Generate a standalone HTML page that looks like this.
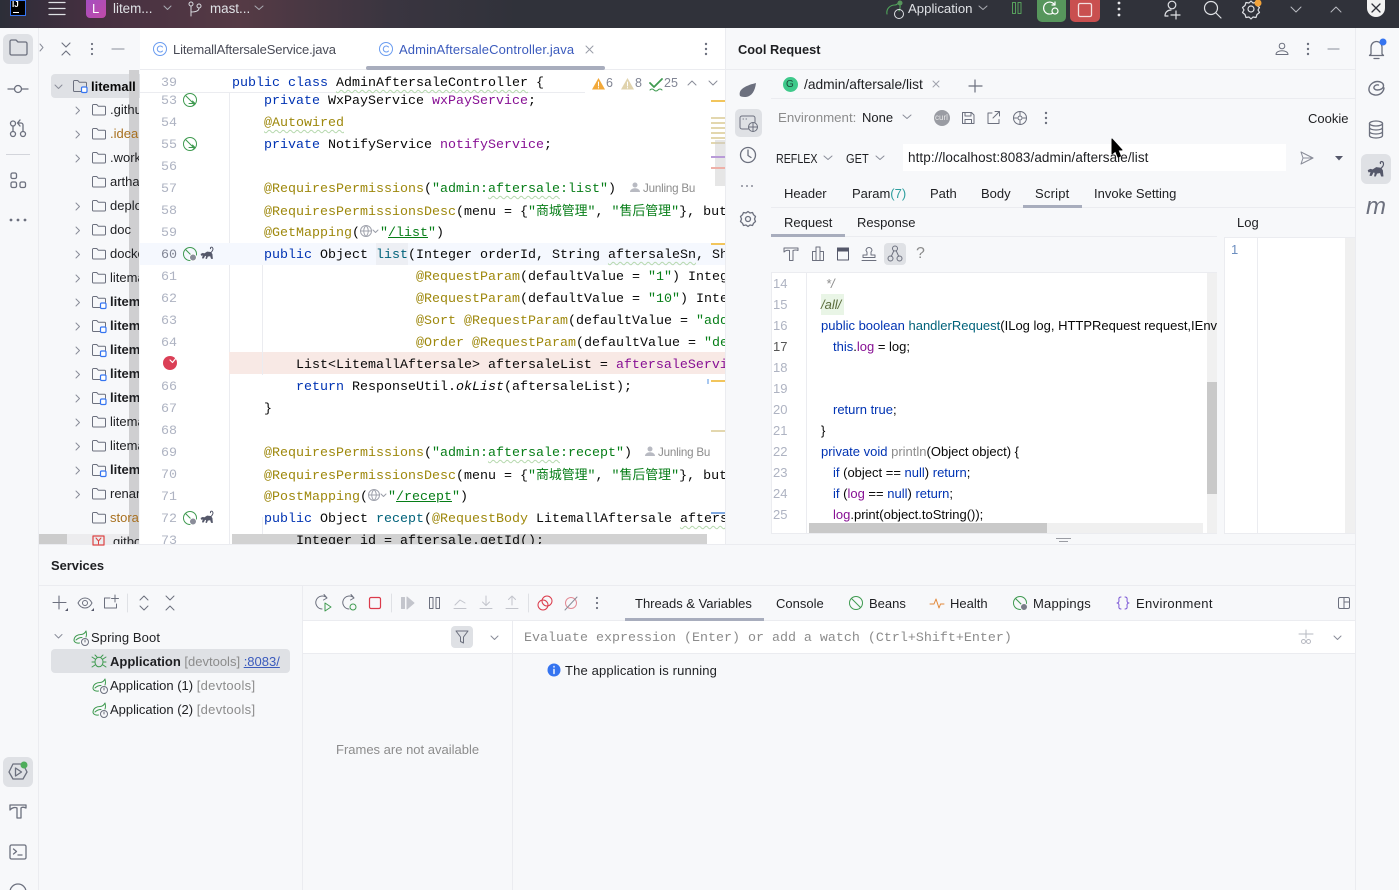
<!DOCTYPE html>
<html><head><meta charset="utf-8"><style>
html,body{margin:0;padding:0;width:1399px;height:890px;overflow:hidden;background:#f7f8fa}
body{font-family:"Liberation Sans","Noto Sans CJK SC",sans-serif;font-size:13px;color:#1e1f22;position:relative}
.a{position:absolute}
.t{position:absolute;white-space:nowrap;line-height:16px;margin-top:1px}
.c{position:absolute;white-space:pre;line-height:22px;height:22px;margin-top:4px;font-family:"Liberation Mono","Noto Sans CJK SC",monospace;font-size:13.333px;color:#080808}
.n{position:absolute;left:140px;width:37px;text-align:right;line-height:22px;margin-top:4px;font-family:"Liberation Mono",monospace;font-size:13.333px;color:#aeb3c2}
.k{color:#0033b3}.an{color:#9e880d}.s{color:#067d17}.f{color:#871094}
.z{font-size:12.9px}
.w{text-decoration:underline wavy #b5d8ad 1px;text-underline-offset:3px}
.g{color:#8c8c8c}
.p{position:absolute;left:110px;white-space:nowrap;line-height:16px}
.b{font-weight:bold}
.l{position:absolute;left:773px;color:#aeb3c2;line-height:21px;font-size:13px}
.q{position:absolute;white-space:pre;line-height:21px;font-size:13px;color:#080808}
</style></head><body>

<!-- title bar -->
<div class="a" style="left:0;top:0;width:1399px;height:28px;background:linear-gradient(90deg,#2c2e38 0,#452f40 90px,#553a45 240px,#3a3540 390px,#30323a 520px,#30323a 100%)"></div>
<div class="a" style="left:10px;top:0;width:14px;height:14px;background:#000;border:1px solid #3574f0"></div>
<div class="t" style="left:12px;top:-1px;font-size:8px;font-weight:bold;color:#fff;line-height:10px">IJ</div>
<div class="a" style="left:13px;top:12px;width:6px;height:1px;background:#fff"></div>
<div class="a" style="left:86px;top:0;width:20px;height:18px;border-radius:0 0 4px 4px;background:linear-gradient(135deg,#a44fc0,#c04aa8)"></div>
<div class="t" style="left:92px;top:0;color:#fff;font-size:13px">L</div>
<div class="t" style="left:113px;top:0;color:#dfe1e5;font-size:13.4px">litem...</div>
<div class="t" style="left:210px;top:0;color:#dfe1e5;font-size:13.4px">mast...</div>
<div class="t" style="left:908px;top:0;color:#dfe1e5;font-size:13.2px">Application</div>
<div class="a" style="left:1037px;top:0;width:29px;height:22px;background:#57965c;border-radius:0 0 5px 5px"></div>
<div class="a" style="left:1070px;top:0;width:30px;height:22px;background:#c94f4f;border-radius:0 0 5px 5px"></div>
<div class="a" style="left:1367px;top:0;width:18px;height:17px;border-radius:0 0 9px 9px;background:#f2f2f2"></div>

<!-- left strip / panels -->
<div class="a" style="left:38px;top:28px;width:1px;height:862px;background:#ebecf0"></div>
<div class="a" style="left:3px;top:34px;width:30px;height:30px;border-radius:6px;background:#dfe1e5"></div>
<div class="a" style="left:3px;top:757px;width:30px;height:30px;border-radius:6px;background:#dfe1e5"></div>
<div class="a" style="left:6px;top:154px;width:24px;height:1px;background:#d3d5db"></div>
<div class="a" style="left:1355px;top:28px;width:1px;height:862px;background:#ebecf0"></div>
<div class="a" style="left:1361px;top:154px;width:30px;height:30px;border-radius:6px;background:#dfe1e5"></div>

<!-- project tree -->
<div class="a" style="left:39px;top:70px;width:101px;height:475px;overflow:hidden">
  <div class="a" style="left:12px;top:4px;width:90px;height:24px;border-radius:4px 0 0 4px;background:#dfe1e5"></div>
  <div class="a" style="left:90px;top:0;width:10px;height:475px;background:#cfcfd1"></div>
</div>
<div class="a" style="left:39px;top:534px;width:90px;height:11px;background:#ececee"></div>
<div class="a" style="left:39px;top:534px;width:28px;height:11px;background:#cccccc"></div>
<div class="a" style="left:0;top:0;width:139px;height:545px;overflow:hidden">
  <div class="p b" style="left:91px;top:79px;color:#080808">litemall</div>
  <div class="p" style="top:102px">.github</div>
  <div class="p" style="top:126px;color:#a8701f">.idea</div>
  <div class="p" style="top:150px">.workflow</div>
  <div class="p" style="top:174px">arthas</div>
  <div class="p" style="top:198px">deploy</div>
  <div class="p" style="top:222px">doc</div>
  <div class="p" style="top:246px">docker</div>
  <div class="p" style="top:270px">litemall</div>
  <div class="p b" style="top:294px">litemall</div>
  <div class="p b" style="top:318px">litemall</div>
  <div class="p b" style="top:342px">litemall</div>
  <div class="p b" style="top:366px">litemall</div>
  <div class="p b" style="top:390px">litemall</div>
  <div class="p" style="top:414px">litemall</div>
  <div class="p" style="top:438px">litemall</div>
  <div class="p b" style="top:462px">litemall</div>
  <div class="p" style="top:486px">rename</div>
  <div class="p" style="top:510px;color:#a8701f">storage</div>
  <div class="p" style="top:534px;left:113px">gitbook</div>
</div>

<!-- editor -->
<div class="a" style="left:140px;top:28px;width:586px;height:517px;background:#fff;overflow:hidden">
  <div class="a" style="left:0;top:41px;width:586px;height:1px;background:#ebecf0"></div>
  <div class="a" style="left:89px;top:42px;width:1px;height:475px;background:#ebecf0"></div>
  <div class="a" style="left:0;top:215px;width:586px;height:22px;background:#f5f8fe"></div>
  <div class="a" style="left:89px;top:324px;width:497px;height:22px;background:#f8e9e5"></div>
  <div class="a" style="left:122px;top:237px;width:1px;height:110px;background:#ebecf0"></div>
  <div class="a" style="left:122px;top:489px;width:1px;height:28px;background:#ebecf0"></div>
</div>
<div class="a" style="left:376px;top:243px;width:32px;height:22px;background:#edeff4"></div>
<div class="t" style="left:173px;top:41px;color:#494b57;letter-spacing:-.14px">LitemallAftersaleService.java</div>
<div class="t" style="left:399px;top:41px;color:#3b5bbd;letter-spacing:.14px">AdminAftersaleController.java</div>
<div class="a" style="left:366px;top:66px;width:239px;height:4px;border-radius:2px;background:#a8adbd"></div>

<div class="a" style="left:140px;top:70px;width:586px;height:475px;overflow:hidden">
<div style="position:absolute;left:-140px;top:-70px;width:726px;height:545px">
<div class="a" style="left:232px;top:534px;width:475px;height:11px;background:#d2d2d2"></div>
<div class="n" style="top:87px">53</div><div class="n" style="top:109px">54</div><div class="n" style="top:131px">55</div><div class="n" style="top:153px">56</div><div class="n" style="top:175px">57</div><div class="n" style="top:197px">58</div><div class="n" style="top:219px">59</div><div class="n" style="top:241px;color:#818594">60</div><div class="n" style="top:263px">61</div><div class="n" style="top:285px">62</div><div class="n" style="top:307px">63</div><div class="n" style="top:329px">64</div><div class="n" style="top:373px">66</div><div class="n" style="top:395px">67</div><div class="n" style="top:417px">68</div><div class="n" style="top:439px">69</div><div class="n" style="top:461px">70</div><div class="n" style="top:483px">71</div><div class="n" style="top:505px">72</div><div class="n" style="top:527px">73</div>

<div class="c" style="left:264px;top:87px"><span class="k">private</span> WxPayService <span class="f">wxPayService</span>;</div>
<div class="c" style="left:264px;top:109px"><span class="an w">@Autowired</span></div>
<div class="c" style="left:264px;top:131px"><span class="k">private</span> NotifyService <span class="f">notifyService</span>;</div>
<div class="c" style="left:264px;top:175px"><span class="an">@RequiresPermissions</span>(<span class="s">"admin:<span class="w">aftersale</span>:list"</span>)</div>
<div class="t g" style="left:643px;top:180px;font-size:11.6px;letter-spacing:-.2px">Junling Bu</div>
<div class="c" style="left:264px;top:197px"><span class="an">@RequiresPermissionsDesc</span>(menu = {<span class="s">"<span class="z">商城管理</span>"</span>, <span class="s">"<span class="z">售后管理</span>"</span>}, but</div>
<div class="c" style="left:264px;top:219px"><span class="an">@GetMapping</span>(</div>
<div class="c" style="left:380px;top:219px"><span class="s">"<span style="text-decoration:underline">/list</span>"</span>)</div>
<div class="c" style="left:264px;top:241px"><span class="k">public</span> Object <span style="color:#00627a">list</span>(Integer orderId, String <span class="w">aftersaleSn</span>, Sh</div>
<div class="c" style="left:416px;top:263px"><span class="an">@RequestParam</span>(defaultValue = <span class="s">"1"</span>) Integ</div>
<div class="c" style="left:416px;top:285px"><span class="an">@RequestParam</span>(defaultValue = <span class="s">"10"</span>) Inte</div>
<div class="c" style="left:416px;top:307px"><span class="an">@Sort</span> <span class="an">@RequestParam</span>(defaultValue = <span class="s">"add</span></div>
<div class="c" style="left:416px;top:329px"><span class="an">@Order</span> <span class="an">@RequestParam</span>(defaultValue = <span class="s">"de</span></div>
<div class="c" style="left:296px;top:351px">List&lt;LitemallAftersale&gt; aftersaleList = <span class="f">aftersaleServi</span></div>
<div class="c" style="left:296px;top:373px"><span class="k">return</span> ResponseUtil.<i>okList</i>(aftersaleList);</div>
<div class="c" style="left:264px;top:395px">}</div>
<div class="c" style="left:264px;top:439px"><span class="an">@RequiresPermissions</span>(<span class="s">"admin:<span class="w">aftersale</span>:recept"</span>)</div>
<div class="t g" style="left:658px;top:444px;font-size:11.6px;letter-spacing:-.2px">Junling Bu</div>
<div class="c" style="left:264px;top:461px"><span class="an">@RequiresPermissionsDesc</span>(menu = {<span class="s">"<span class="z">商城管理</span>"</span>, <span class="s">"<span class="z">售后管理</span>"</span>}, but</div>
<div class="c" style="left:264px;top:483px"><span class="an">@PostMapping</span>(</div>
<div class="c" style="left:388px;top:483px"><span class="s">"<span style="text-decoration:underline">/recept</span>"</span>)</div>
<div class="c" style="left:264px;top:505px"><span class="k">public</span> Object <span style="color:#00627a">recept</span>(<span class="an">@RequestBody</span> LitemallAftersale <span class="w">afters</span></div>
<div class="c" style="left:296px;top:527px">Integer id = aftersale.getId();</div>
</div></div>
<!-- sticky line -->
<div class="a" style="left:140px;top:70px;width:586px;height:22px;background:#fff;border-bottom:1px solid #ebecf0"></div>
<div class="n" style="top:69px">39</div>
<div class="c" style="left:232px;top:69px"><span class="k">public class</span> <span class="w">AdminAftersaleController</span> {</div>
<div class="a" style="left:585px;top:72px;width:140px;height:23px;background:#fff"></div>
<div class="t" style="left:606px;top:74px;color:#818594;font-size:12.5px">6</div>
<div class="t" style="left:635px;top:74px;color:#818594;font-size:12.5px">8</div>
<div class="t" style="left:664px;top:74px;color:#818594;font-size:12.5px">25</div>
<!-- minimap stripes -->
<div class="a" style="left:711px;top:100px;width:14px;height:2px;background:#f2c55c"></div>
<div class="a" style="left:711px;top:117px;width:14px;height:28px;background:repeating-linear-gradient(180deg,#e3d7ae 0 2px,#fff 2px 5px)"></div>
<div class="a" style="left:715px;top:140px;width:10px;height:46px;background:rgba(200,200,200,.45)"></div>
<div class="a" style="left:711px;top:156px;width:14px;height:2px;background:#b99bd8"></div>
<div class="a" style="left:711px;top:167px;width:14px;height:2px;background:#eeb0a8"></div>
<div class="a" style="left:711px;top:243px;width:14px;height:2px;background:#f2c55c"></div>
<div class="a" style="left:711px;top:380px;width:14px;height:2px;background:#f2c55c"></div>
<div class="a" style="left:707px;top:379px;width:2px;height:5px;background:#a8c8f0"></div>
<div class="a" style="left:711px;top:430px;width:14px;height:2px;background:#e3d7ae"></div>
<div class="a" style="left:711px;top:512px;width:14px;height:2px;background:#7fa8e0"></div>

<!-- cool request -->
<div class="a" style="left:725px;top:28px;width:1px;height:517px;background:#ebecf0"></div>
<div class="a" style="left:726px;top:69px;width:629px;height:1px;background:#ebecf0"></div>
<div class="t b" style="left:738px;top:41px;color:#1e1f22;font-size:12.8px">Cool Request</div>
<div class="a" style="left:735px;top:109px;width:27px;height:28px;border-radius:5px;background:#dfe1e5"></div>
<div class="a" style="left:771px;top:98px;width:584px;height:1px;background:#ebecf0"></div>
<div class="a" style="left:783px;top:77px;width:15px;height:15px;border-radius:50%;background:#3fc98b"></div>
<div class="t" style="left:786px;top:76px;font-size:10px;color:#1e4a3a">G</div>
<div class="t" style="left:804px;top:76px;font-size:13.8px">/admin/aftersale/list</div>
<div class="t g" style="left:778px;top:109px;font-size:13.3px">Environment:</div>
<div class="t" style="left:862px;top:109px">None</div>
<div class="a" style="left:934px;top:110px;width:16px;height:16px;border-radius:50%;background:#9a9ca3"></div>
<div class="t" style="left:935px;top:109px;font-size:8px;color:#e8e8e8">curl</div>
<div class="t" style="left:1308px;top:110px">Cookie</div>
<div class="t" style="left:776px;top:150px;transform:scaleX(.82);transform-origin:0 50%">REFLEX</div>
<div class="t" style="left:846px;top:150px;transform:scaleX(.85);transform-origin:0 50%">GET</div>
<div class="a" style="left:903px;top:144px;width:383px;height:27px;background:#fff"></div>
<div class="t" style="left:908px;top:149px;font-size:13.5px;letter-spacing:.08px">http://localhost:8083/admin/aftersale/list</div>
<div class="t" style="left:784px;top:185px">Header</div>
<div class="t" style="left:852px;top:185px">Param<span style="color:#2e9e9e">(7)</span></div>
<div class="t" style="left:930px;top:185px">Path</div>
<div class="t" style="left:981px;top:185px">Body</div>
<div class="t" style="left:1035px;top:185px;letter-spacing:.2px">Script</div>
<div class="t" style="left:1094px;top:185px">Invoke Setting</div>
<div class="a" style="left:771px;top:207px;width:584px;height:1px;background:#ebecf0"></div>
<div class="a" style="left:1023px;top:205px;width:59px;height:3px;background:#a8adbd"></div>
<div class="t" style="left:784px;top:214px">Request</div>
<div class="t" style="left:857px;top:214px">Response</div>
<div class="t" style="left:1237px;top:214px">Log</div>
<div class="a" style="left:771px;top:236px;width:446px;height:1px;background:#ebecf0"></div>
<div class="a" style="left:771px;top:234px;width:74px;height:3px;background:#a8adbd"></div>
<div class="a" style="left:884px;top:243px;width:22px;height:22px;border-radius:4px;background:#dfe1e5"></div>
<div class="t g" style="left:916px;top:245px;font-size:16px">?</div>

<!-- log box -->
<div class="a" style="left:1225px;top:237px;width:120px;height:296px;background:#fff"></div>
<div class="a" style="left:1345px;top:237px;width:10px;height:296px;background:#f0f0f0"></div>
<div class="a" style="left:1225px;top:237px;width:130px;height:1px;background:#ebecf0"></div>
<div class="a" style="left:1224px;top:237px;width:1px;height:297px;background:#ebecf0"></div>
<div class="a" style="left:1257px;top:238px;width:1px;height:295px;background:#ebecf0"></div>
<div class="t" style="left:1231px;top:241px;color:#6c8ebf">1</div>
<div class="a" style="left:1225px;top:533px;width:130px;height:1px;background:#ebecf0"></div>

<!-- script box -->
<div class="a" style="left:771px;top:272px;width:446px;height:262px;overflow:hidden;background:#fff;box-shadow:0 0 0 1px #ebecf0 inset">
  <div style="position:absolute;left:-771px;top:-272px;width:1217px;height:534px">
  <div class="a" style="left:1207px;top:273px;width:10px;height:260px;background:#f0f0f0"></div>
  <div class="a" style="left:1207px;top:382px;width:10px;height:112px;background:#c9c9c9"></div>
  <div class="a" style="left:806px;top:272px;width:1px;height:262px;background:#ebecf0"></div>
  <div class="a" style="left:821px;top:294px;width:23px;height:21px;background:#e9f5e6"></div>
  <div class="l" style="top:273px">14</div><div class="l" style="top:294px">15</div><div class="l" style="top:315px">16</div><div class="l" style="top:336px;color:#555">17</div><div class="l" style="top:357px">18</div><div class="l" style="top:378px">19</div><div class="l" style="top:399px">20</div><div class="l" style="top:420px">21</div><div class="l" style="top:441px">22</div><div class="l" style="top:462px">23</div><div class="l" style="top:483px">24</div><div class="l" style="top:504px">25</div>
  <div class="q" style="left:826px;top:273px;color:#8c8c8c"><i>*/</i></div>
  <div class="q" style="left:821px;top:294px;color:#5a6a3a"><i>/all/</i></div>
  <div class="q" style="left:821px;top:315px"><span class="k">public boolean</span> <span style="color:#00627a">handlerRequest</span>(ILog log, HTTPRequest request,IEnv</div>
  <div class="q" style="left:833px;top:336px"><span class="k">this</span>.<span class="f">log</span> = log;</div>
  <div class="q" style="left:833px;top:399px"><span class="k">return true</span>;</div>
  <div class="q" style="left:821px;top:420px">}</div>
  <div class="q" style="left:821px;top:441px"><span class="k">private void</span> <span class="g">println</span>(Object object) {</div>
  <div class="q" style="left:833px;top:462px"><span class="k">if</span> (object == <span class="k">null</span>) <span class="k">return</span>;</div>
  <div class="q" style="left:833px;top:483px"><span class="k">if</span> (<span class="f">log</span> == <span class="k">null</span>) <span class="k">return</span>;</div>
  <div class="q" style="left:833px;top:504px"><span class="f">log</span>.print(object.toString());</div>
  <div class="a" style="left:809px;top:523px;width:394px;height:10px;background:#f0f0f0"></div>
  <div class="a" style="left:809px;top:523px;width:238px;height:10px;background:#c9c9c9"></div>
  </div>
</div>
<div class="a" style="left:1056px;top:538px;width:15px;height:1px;background:#9a9ca3"></div>
<div class="a" style="left:1059px;top:541px;width:9px;height:1px;background:#9a9ca3"></div>

<!-- bottom panel -->
<div class="a" style="left:39px;top:544px;width:1316px;height:1px;background:#ebecf0"></div>
<div class="t b" style="left:51px;top:557px;font-size:12.9px">Services</div>
<div class="a" style="left:39px;top:585px;width:1316px;height:1px;background:#ebecf0"></div>
<div class="a" style="left:302px;top:586px;width:1px;height:304px;background:#ebecf0"></div>
<div class="a" style="left:303px;top:621px;width:1052px;height:32px;background:#fff"></div>
<div class="a" style="left:303px;top:620px;width:1052px;height:1px;background:#ebecf0"></div>
<div class="a" style="left:303px;top:653px;width:1052px;height:1px;background:#ebecf0"></div>
<div class="a" style="left:512px;top:621px;width:1px;height:269px;background:#ebecf0"></div>
<div class="a" style="left:451px;top:626px;width:22px;height:22px;border-radius:4px;background:#dfe1e5"></div>
<div class="a" style="left:51px;top:649px;width:239px;height:24px;border-radius:4px;background:#dfe1e5"></div>
<div class="t" style="left:91px;top:629px;letter-spacing:.1px">Spring Boot</div>
<div class="t" style="left:110px;top:653px"><b>Application</b> <span class="g">[devtools]</span> <span style="color:#3b5bbd;text-decoration:underline">:8083/</span></div>
<div class="t" style="left:110px;top:677px">Application (1) <span class="g" style="letter-spacing:.3px">[devtools]</span></div>
<div class="t" style="left:110px;top:701px">Application (2) <span class="g" style="letter-spacing:.3px">[devtools]</span></div>
<div class="t" style="left:635px;top:595px">Threads &amp; Variables</div>
<div class="a" style="left:625px;top:618px;width:139px;height:3px;background:#a8adbd"></div>
<div class="t" style="left:776px;top:595px">Console</div>
<div class="t" style="left:869px;top:595px">Beans</div>
<div class="t" style="left:950px;top:595px">Health</div>
<div class="t" style="left:1033px;top:595px;letter-spacing:.2px">Mappings</div>
<div class="t" style="left:1136px;top:595px;letter-spacing:.35px">Environment</div>
<div class="c g" style="left:524px;top:624px;color:#8c8c8c">Evaluate expression (Enter) or add a watch (Ctrl+Shift+Enter)</div>
<div class="t" style="left:565px;top:662px;letter-spacing:.15px">The application is running</div>
<div class="t g" style="left:336px;top:741px">Frames are not available</div>
<div class="t" style="left:1366px;top:194px;font-size:24px;font-style:italic;color:#6c707e;line-height:24px">m</div>

<!-- icons -->
<svg class="a" style="left:0;top:0" width="1399" height="890" viewBox="0 0 1399 890" fill="none" stroke="#6c707e" stroke-width="1" stroke-linecap="round" stroke-linejoin="round">
<defs>
<path id="fo" d="M1.5 3.5a1 1 0 0 1 1-1h3.2l1.6 1.7h6.2a1 1 0 0 1 1 1v6.8a1 1 0 0 1-1 1h-11a1 1 0 0 1-1-1z"/>
<g id="mo"><path d="M9 13.5h-6.5a1 1 0 0 1-1-1v-9a1 1 0 0 1 1-1h3.2l1.6 1.7h6.2a1 1 0 0 1 1 1v3"/><rect x="9.5" y="9" width="5.5" height="5.5" rx="1.2" stroke="#3574f0" stroke-width="1.2" fill="#fff"/></g>
<path id="cr" d="M0 0l3.5 3.5L0 7" stroke="#8a8d99"/>
<path id="cd" d="M0 0l3.5 3.5L7 0" stroke="#8a8d99"/>
<g id="sp" stroke="#3f9a50"><circle cx="7" cy="7" r="6.5"/><path d="M2.5 2.5l9 9M6 10.5h6M9.5 8l2.5 2.5L9.5 13"/></g>
<g id="sg" stroke="#3f9a50"><circle cx="7" cy="7" r="6.5"/><path d="M2.5 2.5l8 8"/><circle cx="10" cy="10.5" r="3.5" fill="#8a8d99" stroke="#fff"/></g>
<g id="mk"><path d="M1 9l2-1 2 .5 3-2 4 .5 1.500 2 .5 5h-1.500l-1-3-3 .5-1 2.500H6.500l.5-3-1.500-.5L4 13.500H2.500l1-3.500L1.500 10.500z" fill="#55586a" stroke="#55586a" stroke-width=".6"/><path d="M12.500 7C14.500 5 14.800 3 13.800 1.800 12.800.8 11.200 1.500 11.700 3" stroke="#55586a" stroke-width="1.100"/></g>
<g id="sb" stroke="#3f9a50"><path d="M1 10.500C1 6 5 4.500 8 4.500c2 0 4-1.500 5-3.500.5 2 .8 4 0 6M1 10.500c.5 2 3 3 5.500 2.500M3 10c2-2 4-2.500 6-2.500"/><circle cx="12" cy="12" r="3.500" fill="#f7f8fa" stroke="#6c707e"/><path d="M12 10v2" stroke="#6c707e"/></g>
<g id="wt"><path d="M6.5 1L13 12.5H0z" stroke="none"/><path d="M6.5 5v4M6.5 10.5v.5" stroke="#fff"/></g>
</defs>

<!-- titlebar -->
<g stroke="#dfe1e5" stroke-width="1.3"><path d="M49 2.5h16M49 8.5h16M49 14.500h16"/></g>
<path d="M164 6l3.500 3.500L171 6M255 6l4 3.500L263 6M979 6l4 3.500L987 6" stroke="#a9abb2"/>
<g stroke="#d8dadf"><circle cx="191" cy="4" r="2"/><circle cx="199" cy="6" r="2"/><path d="M191 6v10M199 8c0 3-3 4-8 4"/></g>
<g stroke="#4fa35a" stroke-width="1.100"><path d="M887 14c-1-5 3-9 8-9 1 0 3-1 4-3 2 4 1 7 0 9"/></g><circle cx="899" cy="14" r="4.500" stroke="#dfe1e5"/>
<circle cx="900" cy="3" r="2.500" fill="#57965c" stroke="none"/>
<path d="M1012.500 2.500h3v11h-3zM1018 2.500h3v11h-3z" stroke="#57a05c"/>
<g stroke="#fff" stroke-width="1.200"><path d="M1054 4a6 6 0 1 0-1 9"/><circle cx="1055" cy="11" r="3"/><path d="M1052 5h3V2"/></g>
<rect x="1078.500" y="3.500" width="13" height="13" rx="1.500" stroke="#f3dede" stroke-width="1.300"/>
<g fill="#e6e7ea" stroke="none"><circle cx="1119" cy="3" r="1.400"/><circle cx="1119" cy="9" r="1.400"/><circle cx="1119" cy="15" r="1.400"/></g>
<g stroke="#dfe1e5" stroke-width="1.200"><circle cx="1172" cy="5" r="3.800"/><path d="M1165 16c0-4 3-6 6-6M1171 15h9M1176 11v8M1165 16h3"/><circle cx="1211" cy="8" r="6.500"/><path d="M1216 13l5 5"/><circle cx="1251" cy="9" r="3"/><path d="M1251 1l2 2 3-.5 1 3 2.500 2-1.500 2.500 1.500 2.500-2.500 2-1 3-3-.5-2 2-2-2-3 .5-1-3-2.500-2 1.500-2.500-1.500-2.500 2.500-2 1-3 3 .5z"/></g>
<circle cx="1258" cy="3" r="3.500" fill="#f2a33a" stroke="none"/>
<path d="M1291 7l5 5 5-5M1331 12l5-5 5 5" stroke="#b8bac0"/>
<path d="M1372 4l8 8M1380 4l-8 8" stroke="#30323a" stroke-width="1.300"/>

<!-- left strip -->
<path d="M10 45V41.500a1.500 1.500 0 0 1 1.500-1.500h4.500l2 2h7.500a1.500 1.500 0 0 1 1.500 1.500v10a1.500 1.500 0 0 1-1.500 1.500h-14a1.500 1.500 0 0 1-1.500-1.500z" stroke-width="1.300"/>
<g stroke-width="1.300"><circle cx="18" cy="89" r="3.500"/><path d="M8 89h6.500M21.500 89H28"/>
<circle cx="13" cy="123.500" r="2.500"/><circle cx="13" cy="134" r="2.500"/><circle cx="23" cy="134" r="2.500"/><path d="M13 126v5.500M23 131.500V125a2 2 0 0 0-2-2h-2M20 120l-2.500 3 2.500 3"/>
<rect x="11" y="173" width="5.500" height="5.500" rx="1.500"/><rect x="11" y="182" width="5.500" height="5.500" rx="1.500"/><rect x="20" y="182" width="5.500" height="5.500" rx="1.500"/></g>
<g fill="#6c707e" stroke="none"><circle cx="11" cy="220" r="1.400"/><circle cx="18" cy="220" r="1.400"/><circle cx="25" cy="220" r="1.400"/></g>
<path d="M13 764h10l4 8-4 7H13l-4-7z" stroke-width="1.300"/><path d="M15.500 768v8l6-4z" stroke-width="1.300"/><circle cx="24" cy="765" r="3.500" fill="#4fad5b" stroke="none"/>
<g stroke-width="1.300"><path d="M10 805h16v3c-2-1-4-1-5 0v10h-4v-10c-2-1-5-.5-7 2z"/><rect x="10" y="845" width="16" height="14" rx="1.500"/><path d="M13.500 849l3 2.500-3 2.500M18 855h4"/><circle cx="18" cy="892" r="8"/></g>

<!-- project header -->
<path d="M40 44l3 3.500-3 3.500" stroke="#8a8d99"/>
<path d="M62 43l4 4 4-4M62 55l4-4 4 4" stroke-width="1.100"/>
<g fill="#6c707e" stroke="none"><circle cx="92" cy="44" r="1.100"/><circle cx="92" cy="49" r="1.100"/><circle cx="92" cy="54" r="1.100"/></g>
<path d="M112 49h12" stroke="#a0a3ad" stroke-width="1.200"/>
<use href="#cd" x="55" y="85"/>
<use href="#mo" x="72" y="78"/>
<use href="#cr" x="76" y="107"/><use href="#fo" x="91" y="102"/>
<use href="#cr" x="76" y="131"/><use href="#fo" x="91" y="126"/>
<use href="#cr" x="76" y="155"/><use href="#fo" x="91" y="150"/>
<use href="#fo" x="91" y="174"/>
<use href="#cr" x="76" y="203"/><use href="#fo" x="91" y="198"/>
<use href="#cr" x="76" y="227"/><use href="#fo" x="91" y="222"/>
<use href="#cr" x="76" y="251"/><use href="#fo" x="91" y="246"/>
<use href="#cr" x="76" y="275"/><use href="#fo" x="91" y="270"/>
<use href="#cr" x="76" y="299"/><use href="#mo" x="91" y="294"/>
<use href="#cr" x="76" y="323"/><use href="#mo" x="91" y="318"/>
<use href="#cr" x="76" y="347"/><use href="#mo" x="91" y="342"/>
<use href="#cr" x="76" y="371"/><use href="#mo" x="91" y="366"/>
<use href="#cr" x="76" y="395"/><use href="#mo" x="91" y="390"/>
<use href="#cr" x="76" y="419"/><use href="#fo" x="91" y="414"/>
<use href="#cr" x="76" y="443"/><use href="#fo" x="91" y="438"/>
<use href="#cr" x="76" y="467"/><use href="#mo" x="91" y="462"/>
<use href="#cr" x="76" y="491"/><use href="#fo" x="91" y="486"/>
<use href="#fo" x="91" y="510"/>
<rect x="93" y="536" width="11" height="9" stroke="#d44" stroke-width="1.200"/>
<path d="M96 538l2.500 3 2.500-3M98.500 541v3" stroke="#d44"/>

<!-- tabs -->
<g stroke="#6a9cf0"><circle cx="160" cy="49" r="6.500"/><path d="M162.500 47a3 3 0 1 0 0 4"/><circle cx="386" cy="49" r="6.500"/><path d="M388.500 47a3 3 0 1 0 0 4"/></g>
<path d="M586 46l7 7M593 46l-7 7" stroke="#9a9da8"/>
<g fill="#6c707e" stroke="none"><circle cx="706" cy="44" r="1.200"/><circle cx="706" cy="49" r="1.200"/><circle cx="706" cy="54" r="1.200"/></g>

<!-- inspections -->
<use href="#wt" x="592" y="77" fill="#f2a93a"/>
<use href="#wt" x="621" y="77" fill="#e0d3ad"/>
<path d="M650 83l4 4 8-8" stroke="#3f9a50" stroke-width="1.800"/><path d="M650 90q2-2 4 0t4 0 4 0" stroke="#3f9a50"/>
<path d="M688 85l4-4 4 4M709 81l4 4 4-4" stroke="#8a8d99"/>

<!-- gutter -->
<use href="#sp" x="183" y="93"/><use href="#sp" x="183" y="137"/>
<use href="#sg" x="183" y="247"/><use href="#mk" transform="translate(200 246) scale(.9)"/>
<use href="#sg" x="183" y="511"/><use href="#mk" transform="translate(200 510) scale(.9)"/>
<circle cx="170" cy="363" r="7" fill="#db3f56" stroke="none"/><path d="M170 360l2.500 2.500 4-5" stroke="#fff" stroke-width="1.200"/>
<g stroke="#a0a3ad"><circle cx="366" cy="231" r="5.500"/><path d="M360.500 231h11M366 225.500c-3 3-3 8 0 11M366 225.500c3 3 3 8 0 11"/><circle cx="374" cy="495" r="5.500"/><path d="M368.500 495h11M374 489.500c-3 3-3 8 0 11M374 489.500c3 3 3 8 0 11"/></g>
<path d="M373 230l2.500 2.500 2.500-2.500M381 494l2.500 2.500 2.500-2.500" stroke="#9a9da8"/>
<g fill="#b8bac2" stroke="none"><circle cx="635" cy="185" r="2.500"/><path d="M630 192c0-5 10-5 10 0z"/><circle cx="650" cy="449" r="2.500"/><path d="M645 456c0-5 10-5 10 0z"/></g>

<!-- cool request header -->
<circle cx="1282" cy="46" r="2.800"/><path d="M1276 54.500c0-5 12-5 12 0z"/>
<g fill="#6c707e" stroke="none"><circle cx="1308" cy="44" r="1.200"/><circle cx="1308" cy="49" r="1.200"/><circle cx="1308" cy="54" r="1.200"/><circle cx="1046" cy="113" r="1.200"/><circle cx="1046" cy="118" r="1.200"/><circle cx="1046" cy="123" r="1.200"/></g>
<path d="M1328 49h11" stroke="#a0a3ad" stroke-width="1.200"/>
<path d="M740 96c-2-6 4-10 16-13-1 8-4 13-10 14-2 0-4 0-6-1z" fill="#6c707e" stroke="none"/>
<rect x="740" y="116" width="15" height="13" rx="2"/><path d="M743 119h.5M746 119h.5"/><circle cx="753" cy="127" r="4.500" fill="#dfe1e5"/><path d="M748.500 127h9M753 122.500v9"/>
<g stroke-width="1.300"><circle cx="748" cy="155" r="7.500"/><path d="M748 150v5.500l3 2"/><circle cx="748" cy="219" r="2.500"/><path d="M748 211.500l2 1.500 2.500-.5 1 2.200 2 1.800-1 2.500 1 2.500-2 1.800-1 2.200-2.500-.5-2 1.500-2-1.500-2.500.5-1-2.200-2-1.800 1-2.500-1-2.500 2-1.800 1-2.200 2.500.5z"/></g>
<g fill="#8a8d99" stroke="none"><circle cx="742" cy="186" r="1"/><circle cx="747" cy="186" r="1"/><circle cx="752" cy="186" r="1"/></g>
<path d="M933 81l6 6M939 81l-6 6" stroke="#a0a3ad"/>
<path d="M975 80v12M969 86h13" stroke="#6c707e" stroke-width="1.200"/>
<path d="M903 115l4 3.500 4-3.500M824 156l4 3.500 4-3.500M876 156l4 3.500 4-3.500" stroke="#8a8d99"/>
<path d="M962.500 112.500h9l2.500 2.500v8.500h-11.500zM965 112.500v3.500h6v-3.500M965 123.500v-4h6.500v4"/>
<path d="M992 113h-4v10.500h11v-4M993 118l6-6M995 111.500h4.500v4.500"/>
<circle cx="1020" cy="118" r="6.500"/><circle cx="1020" cy="118" r="2"/><path d="M1020 111.500v3.500M1020 121v3.500M1013.500 118h3.500M1023 118h3.500"/>
<path d="M1301 152l12 6-12 6 2-6z" stroke="#8a8d99"/><path d="M1303 158h10" stroke="#8a8d99"/>
<path d="M1335 156h8l-4 4.500z" fill="#55586a" stroke="none"/>
<path d="M1112 139v15l3.500-3 2.500 6 2.500-1-2.500-6h4z" fill="#000" stroke="#000"/>

<!-- script toolbar -->
<path d="M784 248h14v2.500c-2-1-3.500-.5-5 0v10h-3.500v-10c-2-.5-4 0-5.500 1.500zM784.500 248h13"/>
<path d="M812.500 251.500h3.500v9h-3.500zM816 247h4v13.500h-4zM820 251.500h3.500v9H820z"/>
<rect x="837.500" y="248" width="11" height="12" stroke="#55586a"/><rect x="837.500" y="248" width="11" height="3" fill="#55586a" stroke="#55586a"/>
<path d="M862 260.500h14M863 257.500h12v-2.500h-4v-3l1-1.500a2.500 2.500 0 1 0-6 0l1 1.500v3h-4z"/>
<circle cx="895" cy="248.500" r="2.500"/><circle cx="890.500" cy="258.500" r="2.500"/><circle cx="899.500" cy="258.500" r="2.500"/><path d="M893.800 250.800l-2.500 5.500M896.200 250.800l2.500 5.500"/>

<!-- right strip -->
<path d="M1371 54v-7a5.500 5.500 0 0 1 11 0v7l1.500 1.500h-14zM1374 58.500h5" stroke-width="1.300"/><circle cx="1383" cy="42" r="3.500" fill="#3574f0" stroke="none"/>
<path d="M1384 88c-.5 4-4 7.500-9 7-4-.5-6.500-3-6-6.500.5-4 4.500-7 8.500-7 3 0 6 1.500 6 4 0 3-3 4.500-6 4.500-2.500 0-4-1.500-3.500-3 .5-1.800 3-2.500 4.500-2" stroke-width="1.400"/>
<g stroke-width="1.300"><ellipse cx="1376" cy="123.500" rx="6.500" ry="2.500"/><path d="M1369.500 123.500v12c0 1.500 3 2.500 6.500 2.500s6.500-1 6.500-2.500v-12M1369.500 127.500c0 1.500 3 2.500 6.500 2.500s6.500-1 6.500-2.500M1369.500 131.500c0 1.500 3 2.500 6.500 2.500s6.500-1 6.500-2.500"/></g>
<use href="#mk" transform="translate(1367 160) scale(1.150)"/>

<!-- services toolbar -->
<path d="M59 596v13M53 602.500h13" stroke-width="1.100"/><path d="M65 611h3v-3z" fill="#55586a" stroke="none"/>
<path d="M78 603c2-4 5-5 7-5s5 1 7 5c-2 4-5 5-7 5s-5-1-7-5z"/><circle cx="85" cy="603" r="2.500"/><path d="M91 611h3v-3z" fill="#55586a" stroke="none"/>
<path d="M110 598h-5.500v10h12v-4M115 595v7M111.500 598.500h7"/>
<path d="M127.500 594v18" stroke="#dfe1e5"/>
<path d="M140 600l4-4 4 4M140 606l4 4 4-4M166 596l4 4 4-4M166 610l4-4 4 4"/>
<path d="M55 634.500l3.500 3.500 3.500-3.500" stroke="#8a8d99"/>
<use href="#sb" x="73" y="630"/>
<g stroke="#3f9a50"><ellipse cx="99" cy="662" rx="4" ry="4.800"/><path d="M92 657l3 2M106 657l-3 2M92 662h3M106 662h-3M92 667l3-2M106 667l-3-2M95 655l2 2M103 655l-2 2"/></g>
<use href="#sb" x="92" y="678"/><use href="#sb" x="92" y="702"/>

<!-- debug toolbar -->
<path d="M327 598a6.500 6.500 0 1 0-5 11M324 594.500l3 3.500-3.500 2"/><path d="M325 603v8l6-4z" stroke="#3f9a50"/>
<path d="M354 598a6.500 6.500 0 1 0-5 11M351 594.500l3 3.500-3.500 2"/><circle cx="353" cy="607" r="3" stroke="#3f9a50"/>
<rect x="369.500" y="597.500" width="11" height="11" rx="1.500" stroke="#db3b4b" stroke-width="1.200"/>
<path d="M391.500 594v18" stroke="#dfe1e5"/>
<path d="M401.500 597.500h3v11h-3zM407 597v12l7-6z" fill="#c3c5cc" stroke="#c3c5cc"/>
<path d="M429.500 597.500h3.500v11h-3.500zM436 597.500h3.500v11H436z"/>
<g stroke="#c3c5cc"><path d="M454 608.500h12M455 605l5-5 5 3"/><path d="M480 608.500h12M486 596v9M482.500 602l3.500 3.500 3.500-3.500"/><path d="M506 608.500h12M512 605v-9M508.500 599.500L512 596l3.500 3.500"/></g>
<path d="M528.500 594v18" stroke="#dfe1e5"/>
<circle cx="543" cy="605" r="5" stroke="#db3b4b"/><circle cx="547" cy="601" r="5" stroke="#db3b4b"/>
<circle cx="571" cy="603" r="5.500" stroke="#e28a94"/><path d="M565 610l12-13" stroke="#8a8d99"/>
<g fill="#6c707e" stroke="none"><circle cx="597" cy="598" r="1.100"/><circle cx="597" cy="603" r="1.100"/><circle cx="597" cy="608" r="1.100"/></g>
<circle cx="856" cy="603" r="6.500" stroke="#3f9a50"/><path d="M851.500 598.500l9 9" stroke="#3f9a50"/>
<path d="M930 604h4l2-5 3 9 1.500-4h3.500" stroke="#e2893a"/>
<circle cx="1020" cy="603" r="6.500" stroke="#3f9a50"/><path d="M1015.500 598.500l7 7" stroke="#3f9a50"/><circle cx="1024" cy="607" r="3.500" fill="#7a7d88" stroke="#f7f8fa"/>
<path d="M1121 597c-3 0-2 3-2 4s-1 2-2 2c1 0 2 1 2 2s-1 4 2 4M1125 597c3 0 2 3 2 4s1 2 2 2c-1 0-2 1-2 2s1 4-2 4" stroke="#7b57d6"/>
<rect x="1338.500" y="597.500" width="11" height="11" rx="1.500"/><path d="M1344 597.500v11M1344 602h5.500"/>
<path d="M456 631h12l-4.500 6v6l-3-1.500V637z"/>
<path d="M491 636l3.500 3.500 3.500-3.500M1334 636l3.500 3.500 3.500-3.500" stroke="#8a8d99"/>
<path d="M1306 630v8M1299 634h14" stroke="#b6b8c0"/><circle cx="1303.500" cy="641.500" r="2" stroke="#b6b8c0"/><circle cx="1308.500" cy="641.500" r="2" stroke="#b6b8c0"/>
<circle cx="554" cy="670" r="6.500" fill="#3574f0" stroke="none"/><path d="M554 669.500v4M554 666.500v.5" stroke="#fff" stroke-width="1.400"/>
</svg>
</body></html>
